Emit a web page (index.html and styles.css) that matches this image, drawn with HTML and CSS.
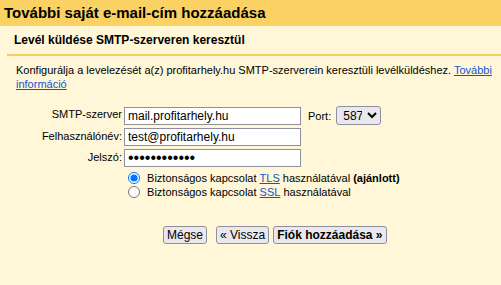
FILE: index.html
```html
<!DOCTYPE html>
<html lang="hu">
<head>
    <meta charset="UTF-8">
    <title>További saját e-mail-cím hozzáadása</title>
    <link rel="stylesheet" href="styles.css">
</head>
<body>
    <div class="title">További saját e-mail-cím hozzáadása</div>
    <div class="subhead">Levél küldése SMTP-szerveren keresztül</div>
    <p class="intro">Konfigurálja a levelezését a(z) profitarhely.hu SMTP-szerverein keresztüli levélküldéshez. <a href="#">További információ</a></p>

    <div class="form">
        <label for="smtp">SMTP-szerver</label>
        <div class="field">
            <input type="text" id="smtp" value="mail.profitarhely.hu">
            <span class="port-label">Port:</span>
            <select id="port">
                <option>587</option>
                <option>465</option>
                <option>25</option>
            </select>
        </div>
        <label for="user">Felhasználónév:</label>
        <div class="field">
            <input type="text" id="user" value="test@profitarhely.hu">
        </div>
        <label for="pass">Jelszó:</label>
        <div class="field">
            <input type="password" id="pass" class="password" value="123456789012">
        </div>
    </div>

    <div class="radios">
        <label class="radio"><input type="radio" name="sec" checked> Biztonságos kapcsolat <a href="#">TLS</a> használatával <b>(ajánlott)</b></label>
        <label class="radio"><input type="radio" name="sec"> Biztonságos kapcsolat <a href="#">SSL</a> használatával</label>
    </div>

    <div class="buttons">
        <button class="cancel">Mégse</button>
        <button>« Vissza</button>
        <button class="primary">Fiók hozzáadása »</button>
    </div>
</body>
</html>
```

FILE: styles.css
```css
body {
    margin: 0;
    background-color: #fff7d7;
    font-family: "Liberation Sans", Arial, sans-serif;
    font-size: 11px;
    color: #000;
}
a {
    color: #1155cc;
}
.title {
    height: 26px;
    line-height: 26px;
    padding-left: 4px;
    background-color: #fad163;
    font-size: 15px;
    font-weight: bold;
}
.subhead {
    margin-left: 7px;
    padding-left: 7px;
    height: 28px;
    line-height: 28px;
    border-bottom: 2px solid #f6cf5e;
    font-size: 12px;
    font-weight: bold;
}
.intro {
    margin: 7px 5px 0 16px;
    line-height: 14px;
}
.form {
    display: grid;
    grid-template-columns: 124px auto;
    row-gap: 3px;
    margin-top: 15px;
}
.form label {
    text-align: right;
    padding-right: 2px;
    line-height: 14px;
    padding-top: 1px;
}
.field {
    display: flex;
    align-items: center;
    gap: 5px;
}
.field input {
    width: 177px;
    height: 18px;
    box-sizing: border-box;
    margin: 0;
    padding: 0 3px;
    border: 1px solid #8f8f9d;
    background: #fff;
    font-family: "Liberation Sans", Arial, sans-serif;
    font-size: 12px;
}
.field .password {
    font-size: 16px;
    letter-spacing: 0;
}
.port-label {
    margin-left: 2px;
}
select {
    height: 19px;
    width: 45px;
    margin: 0;
    padding: 0 2px;
    border: 1px solid #8f8f9d;
    border-radius: 3px;
    background: #e9e9ed;
    font-family: "Liberation Sans", Arial, sans-serif;
    font-size: 12px;
}
.radios {
    margin-top: 4px;
    padding-left: 128px;
}
.radio {
    display: flex;
    align-items: center;
    height: 14px;
    white-space: pre;
}
.radio input {
    margin: 0 4px 0 0;
    width: 12px;
    height: 12px;
}
.buttons {
    display: flex;
    margin-top: 27px;
    padding-left: 163px;
}
button {
    height: 18px;
    margin: 0;
    padding: 0 3px;
    border: 1px solid #8f8f9d;
    border-radius: 3px;
    background: #e9e9ed;
    font-family: "Liberation Sans", Arial, sans-serif;
    font-size: 12px;
    color: #000;
}
.cancel {
    margin-right: 9px;
}
.primary {
    margin-left: 4px;
    font-weight: bold;
}
```
